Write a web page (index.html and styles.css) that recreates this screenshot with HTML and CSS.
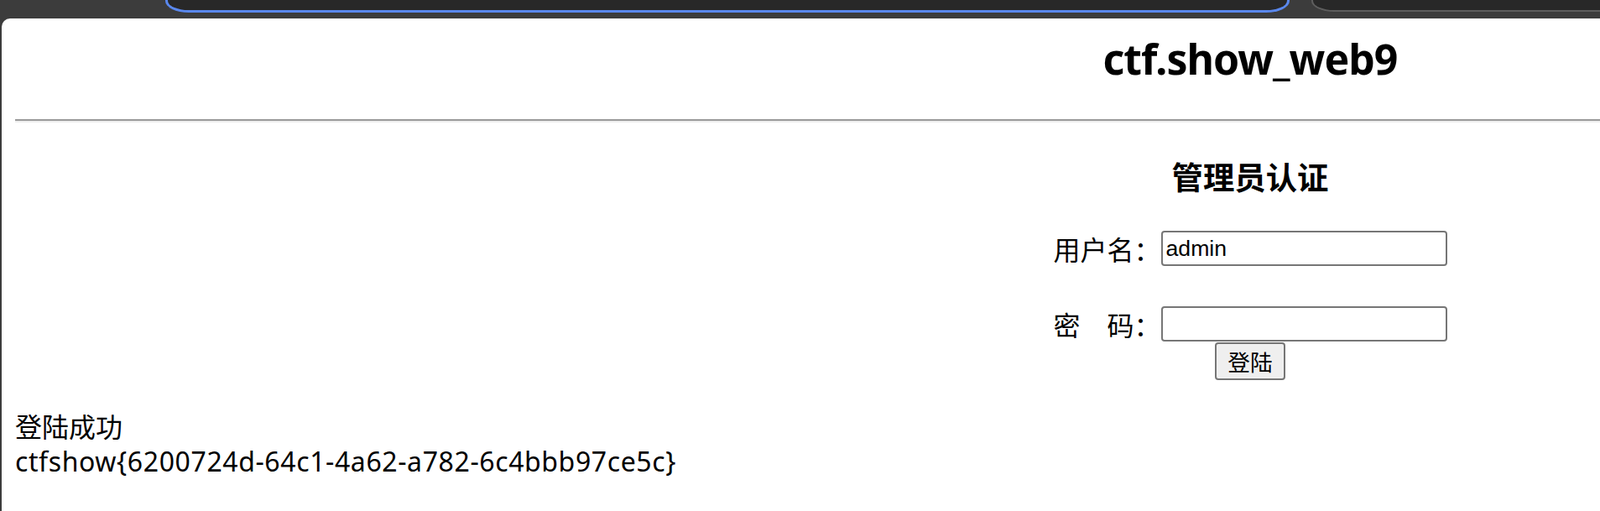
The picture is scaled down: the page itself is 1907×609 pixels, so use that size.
FILE: index.html
```html
<!DOCTYPE html>
<html lang="zh-CN">
<head>
<meta charset="utf-8">
<title>ctf.show_web9</title>
<link rel="stylesheet" href="styles.css">
</head>
<body>
<div class="tabstrip">
  <div class="tab tab-active"></div>
  <div class="tab tab-next"></div>
</div>
<div class="viewport">
  <div class="page">
    <h1 class="title">ctf.show_web9</h1>
    <hr class="rule">
    <form class="login">
      <h3 class="login-title">管理员认证</h3>
      <div class="field">
        <span class="label">用户名：</span>
        <input class="input" type="text" value="admin">
      </div>
      <div class="field field-pass">
        <span class="label">密<span class="gap"></span>码：</span>
        <input class="input" type="password">
      </div>
      <button class="submit" type="button">登陆</button>
    </form>
    <div class="result">登陆成功<br><span class="flag">ctfshow{6200724d-64c1-4a62-a782-6c4bbb97ce5c}</span></div>
  </div>
</div>
</body>
</html>
```
FILE: styles.css
```css
html, body {
  margin: 0;
  padding: 0;
}
body {
  background: #3c3c3c;
  height: 609px;
  overflow: hidden;
  font-family: "Noto Sans", "Noto Sans CJK SC", sans-serif;
  color: #000;
}
.tabstrip {
  height: 22px;
  display: flex;
  align-items: flex-start;
}
.tab {
  box-sizing: border-box;
  background: #282828;
}
.tab-active {
  margin-left: 197px;
  width: 1340px;
  height: 15px;
  border: 3px solid #5a88ee;
  border-top: 0;
  border-radius: 0 0 28px 28px / 0 0 14px 14px;
}
.tab-next {
  margin-left: 26px;
  flex: 1;
  height: 14px;
  border-left: 2px solid #5e5e5e;
  border-bottom: 2px solid #5e5e5e;
  border-bottom-left-radius: 27px 13px;
}
.viewport {
  margin-left: 2px;
  height: 587px;
  background: #fff;
  border-top-left-radius: 10px;
  overflow: hidden;
  box-sizing: border-box;
  padding: 12px 0 0 16px;
}
.page {
  width: 2944px;
  text-align: center;
}
.title {
  margin: 0;
  font-size: 50px;
  letter-spacing: -1px;
  line-height: 72px;
  font-weight: 700;
}
.rule {
  margin: 36px 0 0;
  height: 0;
  border: 0;
  border-top: 2px solid #9a9a9a;
  border-bottom: 2px solid #eeeeee;
}
.login {
  margin: 0;
}
.login-title {
  margin: 42px 0 0;
  font-family: "Noto Sans CJK SC", sans-serif;
  font-size: 37.4px;
  line-height: 44px;
  font-weight: 700;
}
.field {
  display: flex;
  justify-content: center;
  align-items: center;
  height: 42px;
  margin-top: 43px;
  font-size: 32px;
}
.field-pass {
  margin-top: 48px;
}
.label {
  width: 128px;
  text-align: left;
  font-family: "Noto Sans CJK SC", sans-serif;
  white-space: nowrap;
}
.gap {
  display: inline-block;
  width: 32px;
}
.input {
  box-sizing: border-box;
  width: 341px;
  height: 42px;
  margin: 0;
  padding: 2px 4px;
  border: 2px solid #767676;
  border-radius: 4px;
  background: #fff;
  font-family: "Liberation Sans", Arial, sans-serif;
  font-size: 26.67px;
  color: #000;
}
.submit {
  display: block;
  box-sizing: border-box;
  width: 84px;
  height: 45px;
  margin: 1px auto 0;
  padding: 0;
  border: 2px solid #767676;
  border-radius: 4px;
  background: #efefef;
  font-family: "Noto Sans CJK SC", sans-serif;
  font-size: 26.67px;
  line-height: 37px;
  color: #000;
}
.result {
  margin-top: 35px;
  text-align: left;
  font-size: 32px;
  line-height: 41px;
}
.flag {
  letter-spacing: 0.6px;
}
```
